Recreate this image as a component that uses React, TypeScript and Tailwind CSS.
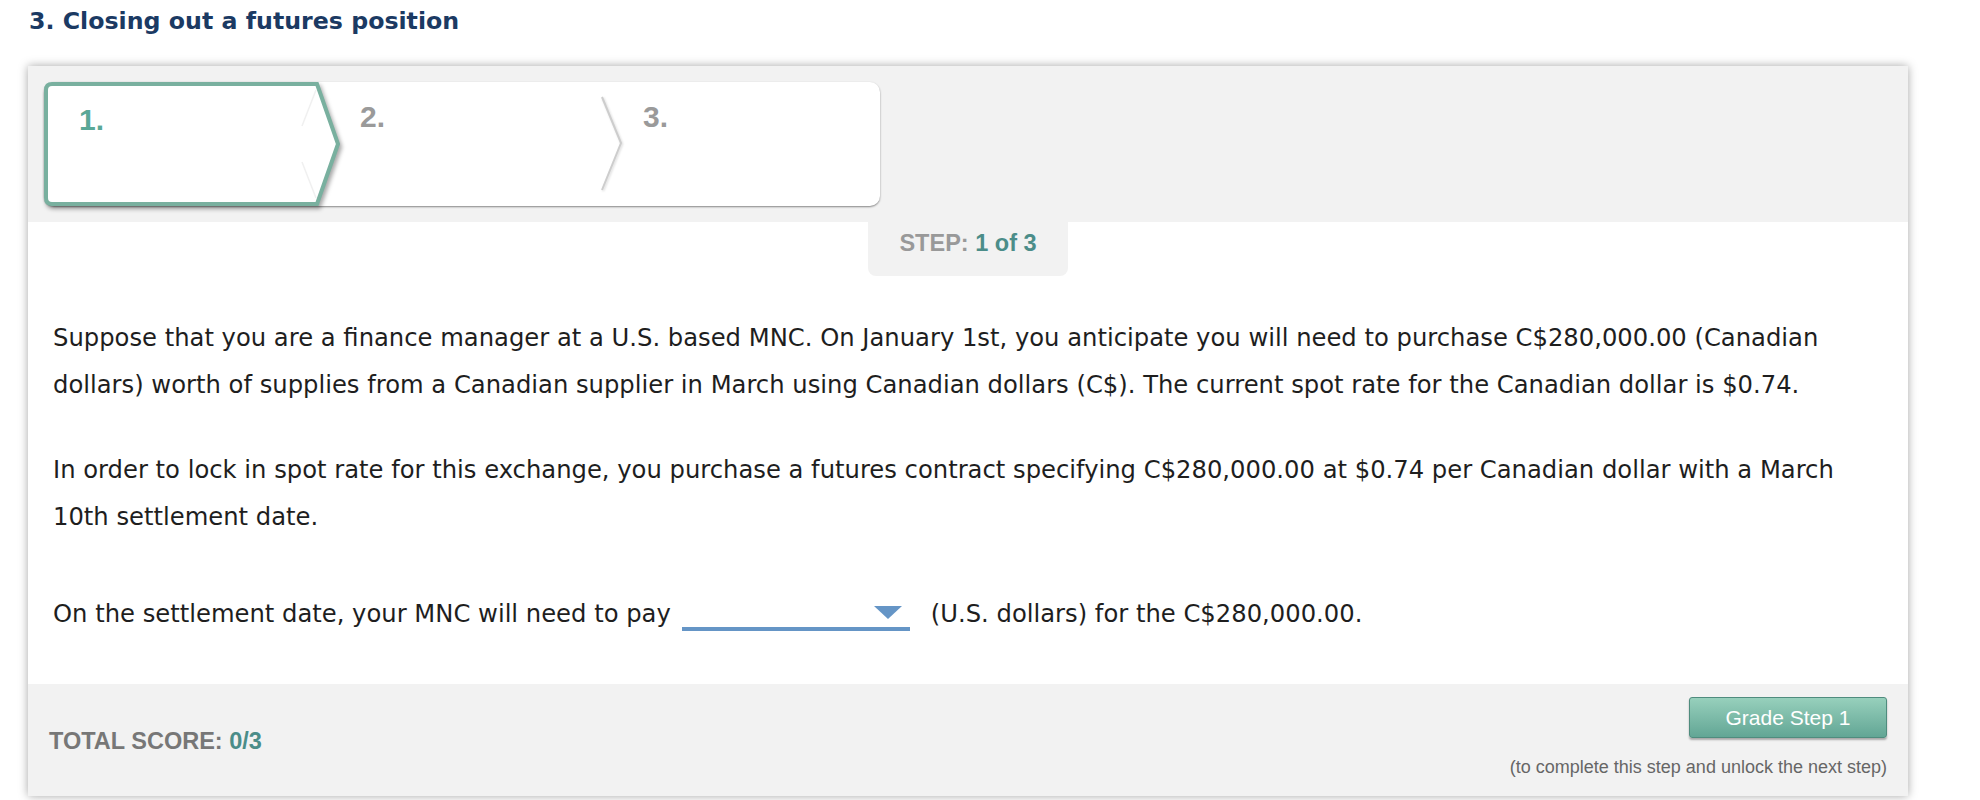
import React from "react";

const SANS = "font-['Liberation_Sans',Arial,Helvetica,sans-serif]";

function ActiveTabShape() {
  return (
    <svg
      width="300"
      height="128"
      viewBox="0 0 300 128"
      className="absolute left-0 top-0 [filter:drop-shadow(2px_3px_2px_rgba(0,0,0,0.35))]"
    >
      <path
        d="M8 2 L273 2 L294 62 L273 122 L8 122 Q2 122 2 116 L2 8 Q2 2 8 2 Z"
        fill="#ffffff"
        stroke="#79b09f"
        strokeWidth="4"
        strokeLinejoin="miter"
      />
      <path d="M272 8 L258 44 M258 80 L272 116" stroke="#f0f0f0" strokeWidth="1.5" fill="none" />
    </svg>
  );
}

function Chevron() {
  return (
    <svg
      width="24"
      height="96"
      viewBox="0 0 24 96"
      className="absolute right-[-1px] top-[14px] [filter:drop-shadow(1px_1px_1px_rgba(0,0,0,0.15))]"
    >
      <polyline points="2,1 21,47 2,94" fill="none" stroke="#cdcdcd" strokeWidth="2" />
    </svg>
  );
}

export default function App() {
  return (
    <div className="min-h-screen bg-white font-['DejaVu_Sans',Verdana,sans-serif] text-[#1e1e1e]">
      <h2 className="pl-[29px] pt-[7px] text-[23.7px] font-bold leading-[28px] text-[#1b3a63]">
        3. Closing out a futures position
      </h2>

      <div className="ml-[28px] mt-[31px] w-[1880px] bg-white shadow-[0_0_9px_rgba(0,0,0,0.35)]">
        {/* step tabs */}
        <div className="bg-[#f2f2f2] p-4">
          <div className={`flex h-[124px] w-[836px] rounded-[10px] bg-white shadow-[0_1px_2px_rgba(0,0,0,0.45)] ${SANS}`}>
            <div className="relative w-[296px]">
              <ActiveTabShape />
              <span className="relative block pl-[35px] pt-[23px] text-[30px] font-bold leading-none text-[#5aa897]">1.</span>
            </div>
            <div className="relative w-[283px]">
              <span className="block pl-[20px] pt-[20px] text-[30px] font-bold leading-none text-[#9a9a9a]">2.</span>
              <Chevron />
            </div>
            <div className="flex-1">
              <span className="block pl-[20px] pt-[20px] text-[30px] font-bold leading-none text-[#9a9a9a]">3.</span>
            </div>
          </div>
        </div>

        {/* step badge */}
        <div className="flex justify-center">
          <div className={`flex h-[54px] w-[200px] justify-center rounded-b-[8px] bg-[#f2f2f2] pt-[10px] text-[23.5px] font-bold leading-none ${SANS}`}>
            <span className="text-[#999999]">STEP:&nbsp;</span>
            <span className="text-[#4b8d89]">1 of 3</span>
          </div>
        </div>

        {/* question */}
        <div className="pb-[47px] pl-[25px] pr-[60px] pt-[38px] text-[24.25px] leading-[47px]">
          <p>
            Suppose that you are a finance manager at a U.S. based MNC. On January 1st, you anticipate you will need to
            purchase C$280,000.00 (Canadian dollars) worth of supplies from a Canadian supplier in March using Canadian
            dollars (C$). The current spot rate for the Canadian dollar is $0.74.
          </p>
          <p className="mt-[38px]">
            In order to lock in spot rate for this exchange, you purchase a futures contract specifying C$280,000.00 at
            $0.74 per Canadian dollar with a March 10th settlement date.
          </p>
          <p className="mt-[50px]">
            On the settlement date, your MNC will need to pay
            <span className="relative mb-[-9px] ml-[11px] mr-[21px] inline-block h-[30px] w-[228px] border-b-4 border-[#6595c6] align-baseline">
              <span className="absolute right-[8px] top-[5px] h-0 w-0 border-l-[14px] border-r-[14px] border-t-[13px] border-l-transparent border-r-transparent border-t-[#6595c6]" />
            </span>
            (U.S. dollars) for the C$280,000.00.
          </p>
        </div>

        {/* footer */}
        <div className={`flex justify-between bg-[#f2f2f2] px-[21px] pb-[20px] pt-[13px] ${SANS}`}>
          <div className="pt-[33px] text-[23.5px] font-bold leading-none">
            <span className="text-[#777777]">TOTAL SCORE: </span>
            <span className="text-[#4b8d89]">0/3</span>
          </div>
          <div className="flex flex-col items-end">
            <button className="h-[41px] w-[198px] rounded-[3px] border border-[#4f8c7e] bg-gradient-to-b from-[#97d0bc] to-[#62a695] text-[21px] leading-none text-white shadow-[0_2px_2px_rgba(0,0,0,0.3)]">
              Grade Step 1
            </button>
            <p className="mt-[20px] text-[18px] leading-none text-[#666666]">
              (to complete this step and unlock the next step)
            </p>
          </div>
        </div>
      </div>
    </div>
  );
}
